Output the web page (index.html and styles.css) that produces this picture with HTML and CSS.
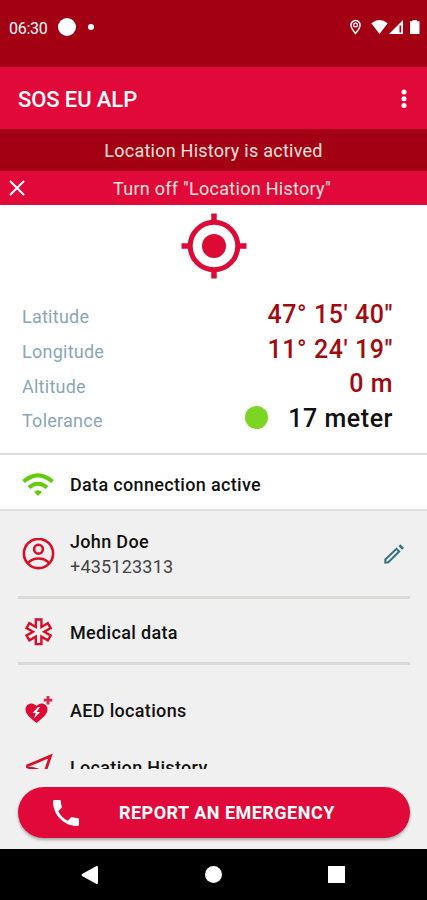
FILE: index.html
```html
<!DOCTYPE html>
<html lang="en">
<head>
    <meta charset="UTF-8">
    <meta name="viewport" content="width=device-width, initial-scale=1.0">
    <title>SOS EU ALP</title>
    <link rel="stylesheet" href="styles.css">
</head>
<body>
    <div class="status-bar">
        <span class="time">06:30</span>
        <span class="dot-big"></span>
        <span class="dot-small"></span>
        <svg class="status-icons" width="72" height="18" viewBox="0 0 72 18">
            <path d="M6.500 2.500a4.600 4.600 0 0 0-4.600 4.600c0 3.200 4.600 8.300 4.600 8.300s4.600-5.100 4.600-8.300a4.600 4.600 0 0 0-4.600-4.600z" fill="none" stroke="#fff" stroke-width="1.500"/>
            <circle cx="6.500" cy="7" r="1.900" fill="none" stroke="#fff" stroke-width="1.200"/>
            <path d="M22.300 5.300Q30.500-1.500 38.700 5.300L30.500 16z" fill="#fff"/>
            <path d="M40 16L54 2v14z" fill="#fff"/>
            <path d="M50.500 7.500h1.700v7h-1.700z" fill="#a30014"/>
            <path d="M61 3.300h2.500V2h4.500v1.300h2.500V16H61z" fill="#fff"/>
        </svg>
    </div>
    <div class="toolbar">
        <h1>SOS EU ALP</h1>
        <svg width="8" height="22" viewBox="0 0 8 22" fill="#fff">
            <circle cx="4" cy="4" r="2.500"/>
            <circle cx="4" cy="10.700" r="2.500"/>
            <circle cx="4" cy="17.400" r="2.500"/>
        </svg>
    </div>
    <div class="notice">Location History is actived</div>
    <div class="turn-off">
        <svg width="16" height="16" viewBox="0 0 16 16" stroke="#fff" stroke-width="2">
            <path d="M1 1l14 14M15 1L1 15"/>
        </svg>
        <span>Turn off "Location History"</span>
    </div>
    <div class="location">
        <svg class="target" width="66" height="66" viewBox="0 0 66 66">
            <circle cx="33" cy="33" r="23.800" fill="none" stroke="#dc0a35" stroke-width="5"/>
            <circle cx="33" cy="33" r="12" fill="#dc0a35"/>
            <path d="M33 .5v9M33 56.500v9M.5 33h9M56.500 33h9" stroke="#dc0a35" stroke-width="5.500"/>
        </svg>
        <div class="row">
            <span class="label">Latitude</span>
            <span class="value">47° 15' 40"</span>
        </div>
        <div class="row">
            <span class="label">Longitude</span>
            <span class="value">11° 24' 19"</span>
        </div>
        <div class="row">
            <span class="label">Altitude</span>
            <span class="value">0 m</span>
        </div>
        <div class="row">
            <span class="label">Tolerance</span>
            <span class="green-dot"></span>
            <span class="value black">17 meter</span>
        </div>
    </div>
    <div class="connection">
        <svg width="32" height="24" viewBox="0 0 32 24" fill="none" stroke="#62cb0b" stroke-width="4">
            <path d="M1.500 8.500Q16-3.800 30.500 8.500"/>
            <path d="M7 14.500Q16 7 25 14.500"/>
            <path d="M12 18.800Q16 15.800 20 18.800L16 23z" fill="#62cb0b" stroke="none"/>
        </svg>
        <span>Data connection active</span>
    </div>
    <div class="list">
        <div class="item user">
            <svg width="33" height="32" viewBox="0 0 33 32" fill="none" stroke="#d80f26" stroke-width="2.600">
                <circle cx="16.500" cy="15.500" r="14.600"/>
                <circle cx="16.500" cy="11.200" r="4.400"/>
                <path d="M6 25Q10 20.500 16.500 20.500t10.500 4.500"/>
            </svg>
            <div class="user-text">
                <div>John Doe</div>
                <div class="phone">+435123313</div>
            </div>
            <svg class="pencil" width="22" height="22" viewBox="0 0 22 22" fill="none" stroke="#34717f" stroke-width="2">
                <path d="M2.300 16.500L13.500 5.800l2.700 2.700L5.300 19.300l-3 .4z"/>
                <path d="M15.500 3.200l1.900-1.900 3.600 3.600-1.900 1.900z" fill="#34717f" stroke="none"/>
            </svg>
        </div>
        <div class="item medical">
            <svg width="33" height="32" viewBox="-16.600 -15.800 33 32" fill="none" stroke="#d80f26" stroke-width="2.400">
                <path d="M-2.800-12.300h5.600v7.450l6.450-3.720 2.800 4.840L5.600 0l6.450 3.730-2.800 4.840L2.800 4.850v7.450h-5.600V4.850l-6.450 3.720-2.800-4.840L-5.600 0l-6.450-3.730 2.800-4.840 6.450 3.720z"/>
            </svg>
            <span>Medical data</span>
        </div>
        <div class="item aed">
            <svg width="33" height="32" viewBox="0 0 33 32">
                <path d="M14.500 29C8.500 24 3.500 20.300 3.500 15.500c0-6.500 7.500-8 11-3.500 3.500-4.500 11-3 11 3.500 0 4.800-5 8.500-11 13.500z" fill="#dc0a35"/>
                <path d="M16 13l-5.500 6h3.300L12 24.500l6-6.500h-3.300l3.300-5z" fill="#fff"/>
                <path d="M26 2v8.500M21.700 6.200h8.600" stroke="#d52b43" stroke-width="2.800"/>
            </svg>
            <span>AED locations</span>
        </div>
        <div class="item history">
            <svg width="33" height="32" viewBox="0 0 33 32" fill="none" stroke="#d80f26" stroke-width="2.800">
                <path d="M28.500 5L5.500 14.800v1.200l10.500 3 3 10h1.300z"/>
            </svg>
            <span>Location History</span>
        </div>
    </div>
    <div class="footer">
        <button type="button">
            <svg width="26" height="26" viewBox="3 3 18 18" fill="#fff">
                <path d="M6.620 10.790c1.440 2.830 3.760 5.140 6.590 6.590l2.200-2.200c.27-.27.67-.36 1.020-.24 1.120.37 2.330.57 3.570.57.55 0 1 .45 1 1V20c0 .55-.45 1-1 1-9.390 0-17-7.610-17-17 0-.55.45-1 1-1h3.500c.55 0 1 .45 1 1 0 1.250.2 2.450.57 3.570.11.35.03.74-.25 1.020l-2.200 2.200z"/>
            </svg>
            <span>REPORT AN EMERGENCY</span>
        </button>
    </div>
    <div class="nav-bar">
        <svg width="18" height="20" viewBox="0 0 18 20"><path d="M1.500 10L16 2v16z" fill="#fff" stroke="#fff" stroke-width="2" stroke-linejoin="round"/></svg>
        <span class="home"></span>
        <span class="recent"></span>
    </div>
</body>
</html>
```
FILE: styles.css
```css
*{margin:0;padding:0;box-sizing:border-box;}
body{height:900px;overflow:hidden;display:flex;flex-direction:column;font-family:Roboto,sans-serif;font-size:18px;background-color:#f0f0f0;color:#111;white-space:nowrap;}
svg{display:block;flex:none;}

.status-bar{height:67px;padding:0 6px 13px 9px;display:flex;align-items:center;background-color:#a30014;color:#fff;}
.time{width:49px;padding-top:2px;font-size:16px;letter-spacing:-0.300px;}
.dot-big{width:18px;height:18px;border-radius:50%;background-color:#fff;}
.dot-small{width:6px;height:6px;margin-left:12px;border-radius:50%;background-color:#fff;}
.status-icons{margin-left:auto;}

.toolbar{height:62px;padding:2px 19px 0 18px;display:flex;align-items:center;justify-content:space-between;background-color:#e0093a;color:#fff;}
.toolbar h1{font-size:22px;font-weight:500;letter-spacing:-0.100px;}
.notice{height:42px;line-height:44px;text-align:center;letter-spacing:0.250px;background-color:#a30014;color:#fbe3dc;}
.turn-off{height:34px;padding-left:9px;display:flex;align-items:center;background-color:#e0093a;color:#fbe3dc;}
.turn-off span{flex:1;padding:1px 8px 0 0;text-align:center;letter-spacing:0.270px;}

.location{height:250px;padding:8px 34px 0 22px;border-bottom:2px solid #dfdfdf;background-color:#fff;}
.target{margin:0 auto 18px;transform:translateX(6px);}
.row{height:34.700px;display:flex;align-items:center;}
.label{margin-right:auto;padding-top:5px;letter-spacing:0.250px;color:#8aa5b8;}
.value{font-size:25px;font-weight:500;letter-spacing:0.550px;color:#a00b12;}
.black{color:#111;}
.green-dot{width:23px;height:23px;margin:0 20px 2px 0;border-radius:50%;background-color:#7bd522;}

.connection{height:56px;padding:5px 22px 0;display:flex;align-items:center;gap:16px;border-bottom:2px solid #dfdfdf;background-color:#fff;font-weight:500;letter-spacing:0.330px;}
.list{height:258px;padding:0 17px 0 18px;overflow:hidden;font-weight:500;letter-spacing:0.330px;}
.item{padding-left:4px;display:flex;align-items:center;gap:15px;}
.user{height:88px;border-bottom:3px solid #d9d9d7;}
.user-text{line-height:25px;}
.phone{font-weight:400;letter-spacing:0.200px;color:#444;}
.pencil{margin:0 5px 0 auto;}
.medical{height:66px;padding-top:3px;border-bottom:3px solid #d9d9d7;}
.aed{height:86px;padding-top:4px;}
.history{height:32px;}

.footer{height:80px;padding:18px 17px 0 18px;}
.footer button{width:100%;height:51px;padding-left:35px;display:flex;align-items:center;border:0;border-radius:26px;background-color:#e0093a;box-shadow:0 2px 3px rgba(0,0,0,0.3);color:#fff;font:700 18px Roboto,sans-serif;letter-spacing:0.480px;}
.footer button span{margin-left:40px;}
.nav-bar{height:51px;padding:0 82px 0 81px;display:flex;align-items:center;justify-content:space-between;background-color:#000;}
.home{width:17px;height:17px;border-radius:50%;background-color:#fff;}
.recent{width:17px;height:17px;background-color:#fff;}
```
